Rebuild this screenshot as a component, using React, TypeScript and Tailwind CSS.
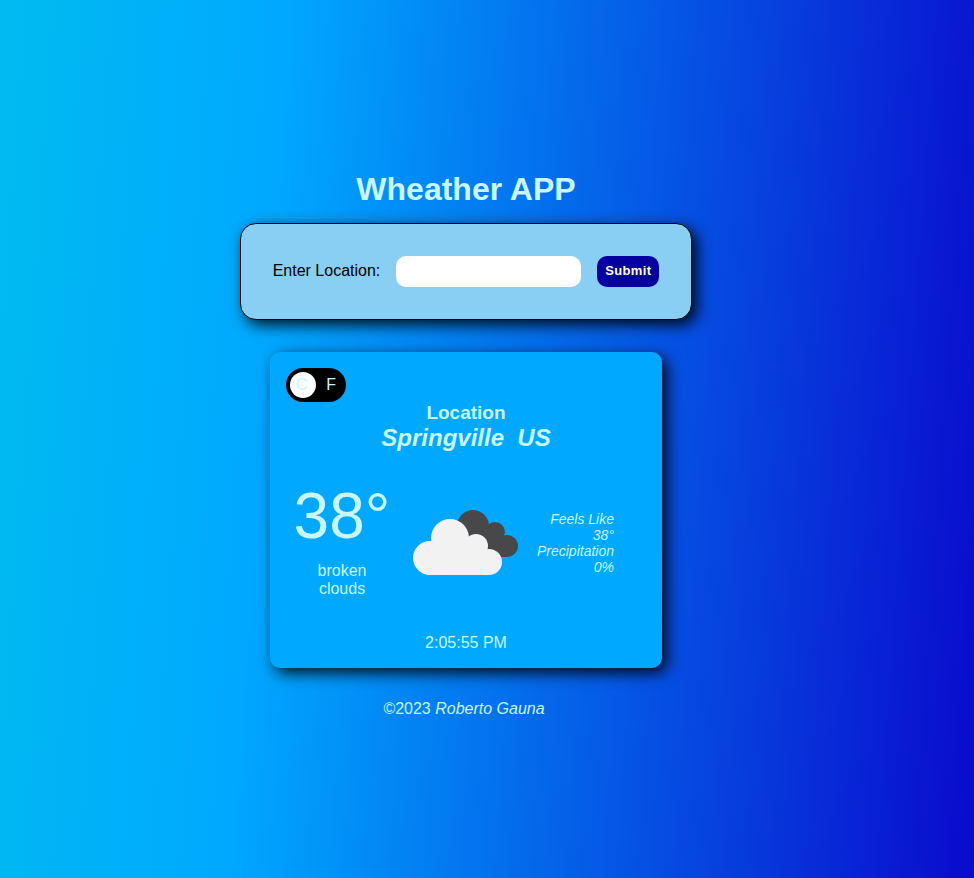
import { useState } from 'react';

function BrokenClouds() {
  return (
    <svg width="106" height="66" viewBox="0 0 106 66" role="img" aria-label="broken clouds">
      <g fill="#48484a">
        <circle cx="60" cy="16" r="16" />
        <circle cx="82" cy="22" r="10" />
        <circle cx="94" cy="36" r="11" />
        <path d="M50 20h32l12 27H50z" />
      </g>
      <g fill="#f2f2f2">
        <circle cx="17" cy="48" r="17" />
        <circle cx="37" cy="28" r="19" />
        <circle cx="63" cy="36" r="12" />
        <circle cx="76" cy="52" r="13" />
        <path d="M17 65V40l20-12 26 8 13 16v13z" />
      </g>
    </svg>
  );
}

function UnitToggle() {
  const [fahrenheit, setFahrenheit] = useState(false);
  return (
    <label className="relative flex h-[34px] w-[60px] cursor-pointer items-center justify-between rounded-full bg-black px-[10px]">
      <input
        type="checkbox"
        aria-label="Show Fahrenheit"
        checked={fahrenheit}
        onChange={(e) => setFahrenheit(e.target.checked)}
        className="peer sr-only"
      />
      <span className="absolute left-1 top-1 size-[26px] rounded-full bg-white peer-checked:translate-x-[26px]" />
      <span className="relative">C</span>
      <span className="relative">F</span>
    </label>
  );
}

export default function App() {
  return (
    <div className="flex min-h-screen flex-col items-center justify-center bg-[linear-gradient(94deg,#00bbf0_0%,#00a8ff_28%,#0a0acd_100%)] pt-[10px] pr-[42px] font-['Liberation_Sans',Arial,sans-serif] text-base leading-[18px] text-[#c8f7ff]">
      <h1 className="text-[32px] leading-9 font-bold">Wheather APP</h1>

      <form
        onSubmit={(e) => e.preventDefault()}
        className="mt-4 flex items-center gap-4 rounded-2xl border border-black bg-[#89cff3] p-8 text-black shadow-[5px_5px_15px_rgba(0,0,0,0.9)]"
      >
        <label htmlFor="location">Enter Location:</label>
        <input id="location" type="text" className="h-[31px] w-[185px] rounded-[10px] bg-white px-2 outline-none" />
        <button type="submit" className="h-[31px] rounded-[10px] bg-[#0500a0] px-2 text-[13px] font-bold tracking-wide text-white">
          Submit
        </button>
      </form>

      <main className="mt-8 w-[392px] max-w-full rounded-[10px] bg-[#00a8ff] p-4 shadow-[5px_5px_15px_rgba(0,0,0,0.9)]">
        <UnitToggle />
        <header className="text-center font-bold">
          <h2 className="text-[19px] leading-[22px]">Location</h2>
          <p className="text-2xl leading-7 whitespace-pre italic">{'Springville  US'}</p>
        </header>

        <section className="mt-8 flex min-h-[118px] items-center">
          <div className="w-28 self-start text-center">
            <p className="text-[64px] leading-[64px]">38°</p>
            <p className="mt-[14px] px-4">broken clouds</p>
          </div>
          <div className="flex flex-1 justify-center">
            <BrokenClouds />
          </div>
          <div className="w-28 pr-8 text-right text-sm leading-4 italic">
            <p>Feels Like</p>
            <p>38°</p>
            <p>Precipitation</p>
            <p>0%</p>
          </div>
        </section>

        <p className="mt-8 text-center">2:05:55 PM</p>
      </main>

      <footer className="mt-8 pr-1">
        ©2023 <em>Roberto Gauna</em>
      </footer>
    </div>
  );
}
